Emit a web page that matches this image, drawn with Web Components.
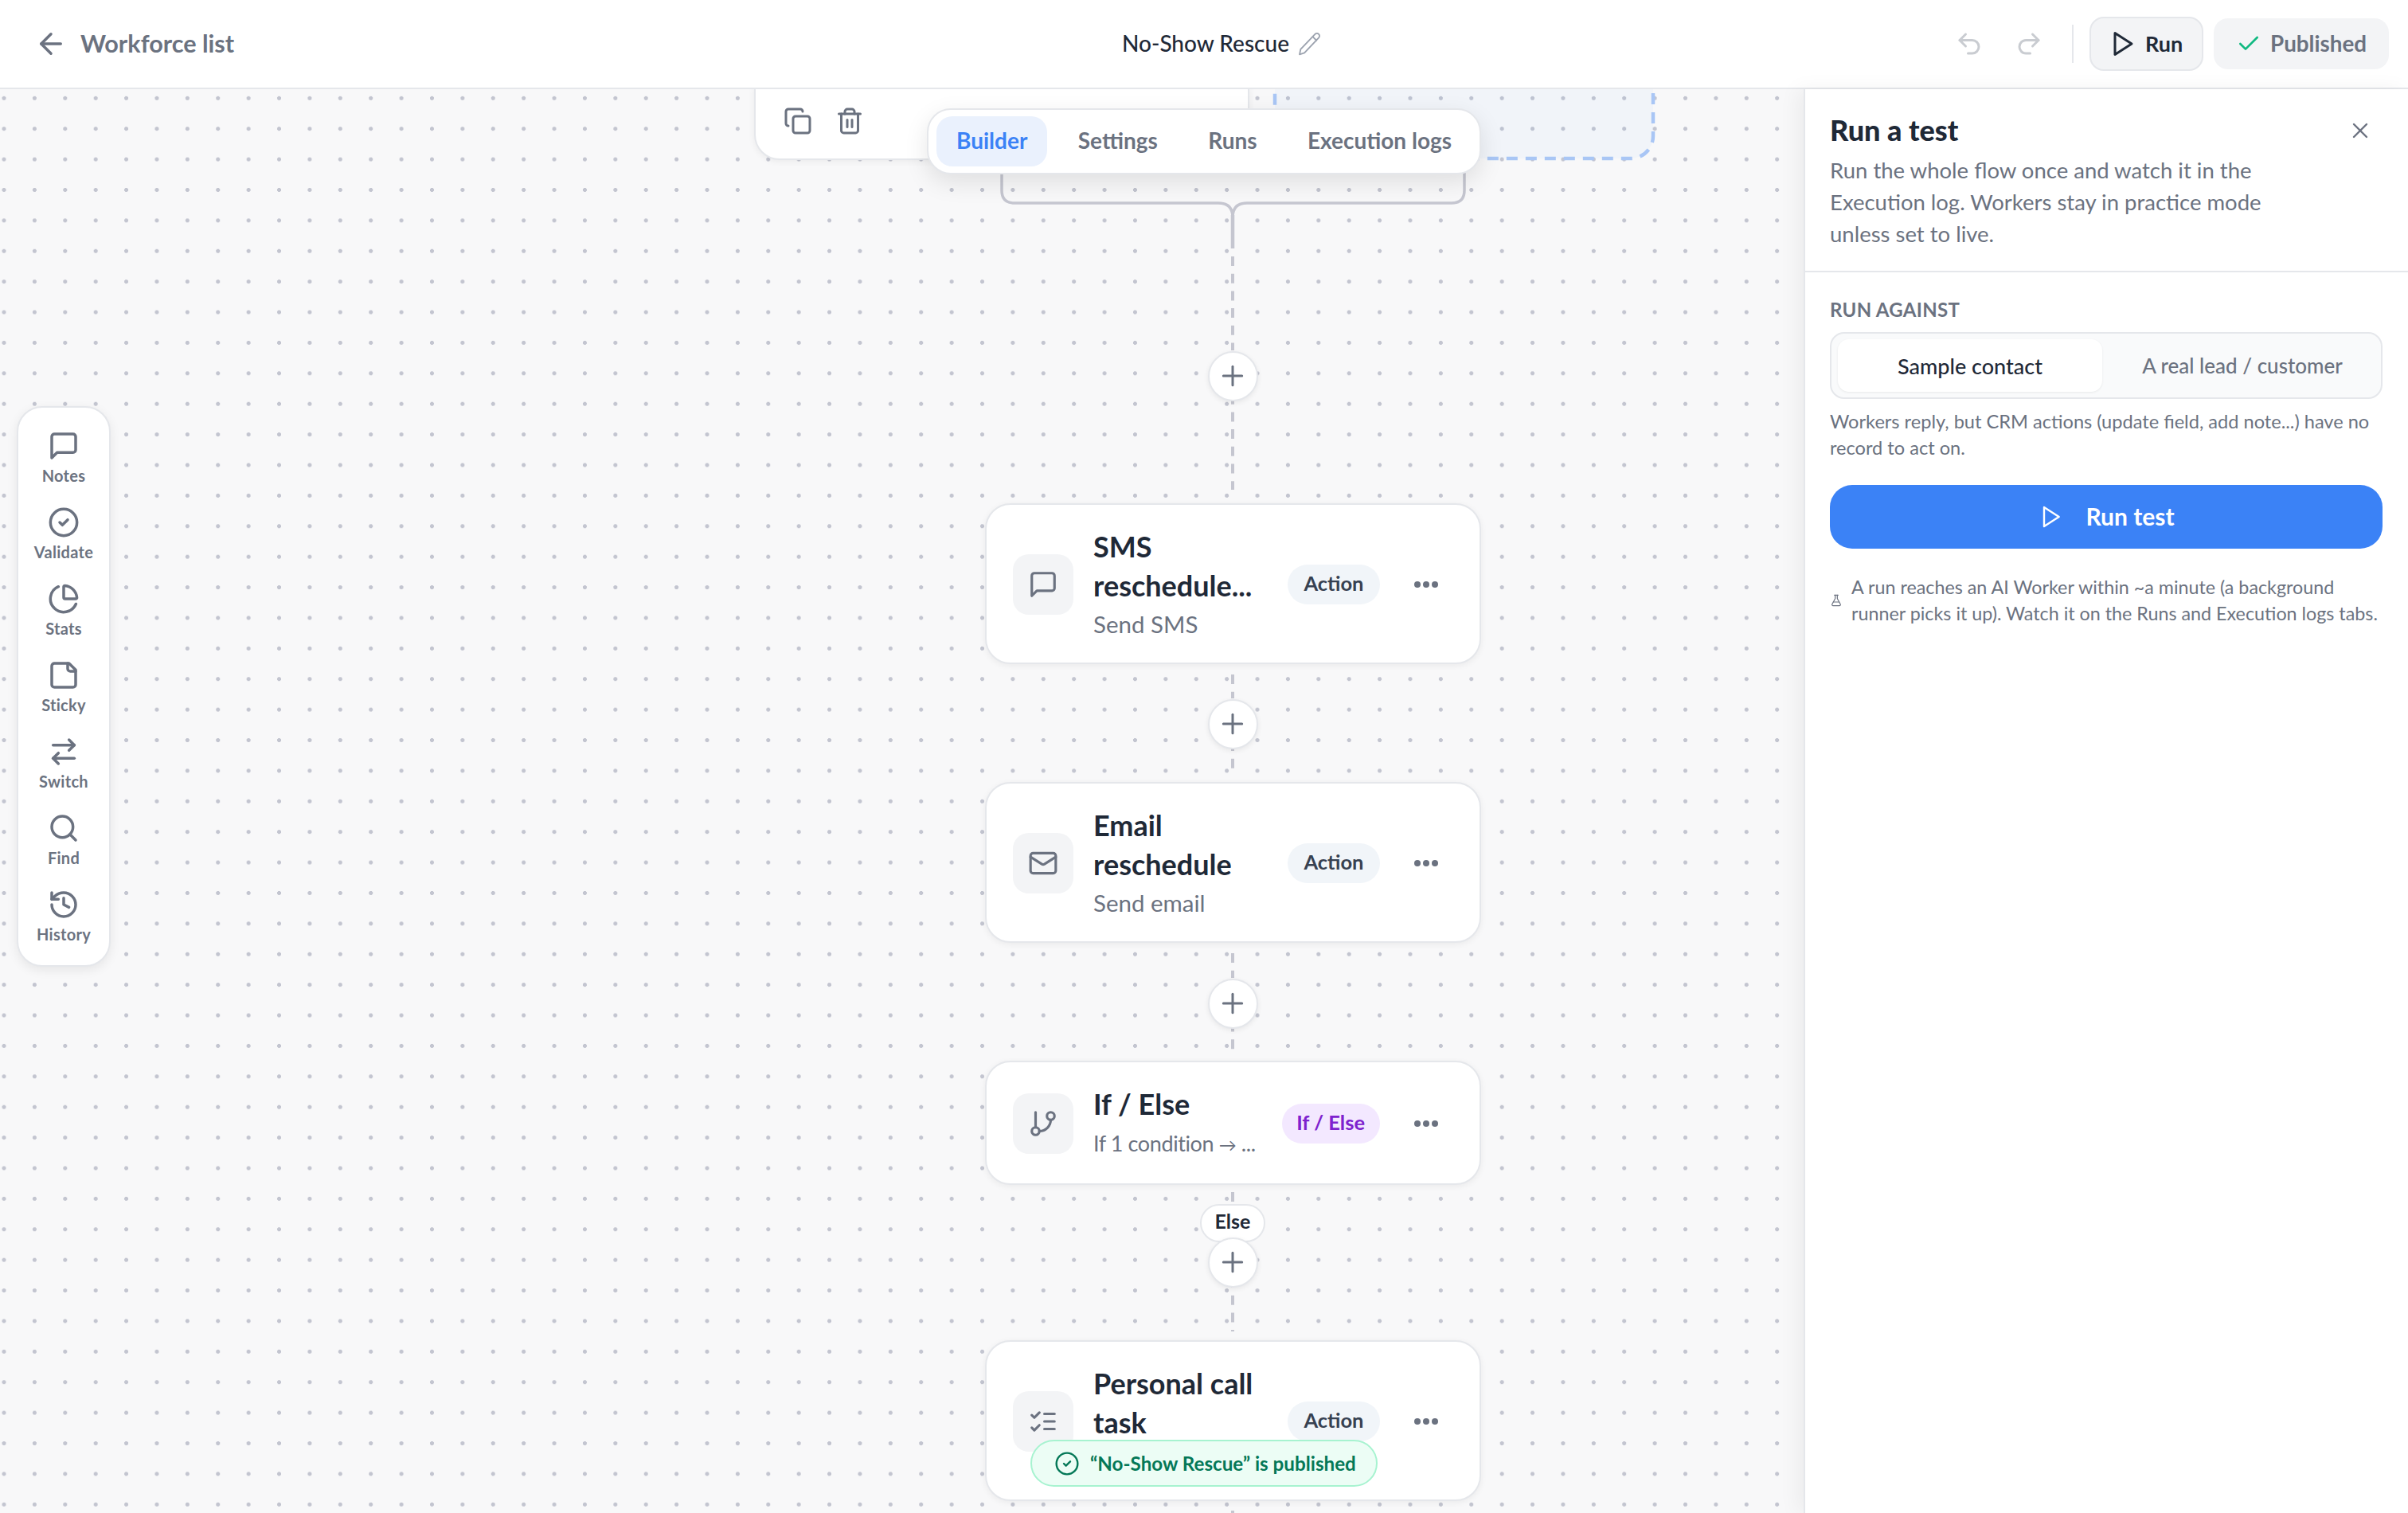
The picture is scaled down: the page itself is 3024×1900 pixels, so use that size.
<!DOCTYPE html>
<html lang="en">
<head>
<meta charset="utf-8">
<title>No-Show Rescue</title>
<style>
  html, body { margin: 0; padding: 0; background: #fff; }
  body { font-family: Lato, "Open Sans", sans-serif; color: #1f2937; }
</style>
</head>
<body>
<workflow-app></workflow-app>
<script>
const icons = {
  back: '<path d="m12 19-7-7 7-7"/><path d="M19 12H5"/>',
  pencil: '<path d="M17.6 2.9a2.4 2.4 0 0 1 3.5 3.4L7.6 20.6 3 22l1-4.8Z"/><path d="m15.4 5.4 3.5 3.4"/>',
  undo: '<path d="M9 14 4 9l5-5"/><path d="M4 9h10.5a5.5 5.5 0 0 1 0 11H11"/>',
  redo: '<path d="m15 14 5-5-5-5"/><path d="M20 9H9.5a5.5 5.5 0 0 0 0 11H13"/>',
  play: '<polygon points="6 3 20 12 6 21 6 3"/>',
  check: '<path d="M20 6 9 17l-5-5"/>',
  close: '<path d="M18 6 6 18"/><path d="m6 6 12 12"/>',
  copy: '<rect x="8" y="8" width="14" height="14" rx="2"/><path d="M4 16c-1.1 0-2-.9-2-2V4c0-1.1.9-2 2-2h10c1.1 0 2 .9 2 2"/>',
  trash: '<path d="M3 6h18"/><path d="M19 6v14c0 1-1 2-2 2H7c-1 0-2-1-2-2V6"/><path d="M8 6V4c0-1 1-2 2-2h4c1 0 2 1 2 2v2"/><path d="M10 11v6"/><path d="M14 11v6"/>',
  note: '<path d="M21 15a2 2 0 0 1-2 2H7l-4 4V5a2 2 0 0 1 2-2h14a2 2 0 0 1 2 2z"/>',
  validate: '<circle cx="12" cy="12" r="10"/><path d="m9 12 2 2 4-4"/>',
  stats: '<path d="M21 12c.552 0 1.005-.449.95-.998a10 10 0 0 0-8.953-8.951c-.55-.055-.998.398-.998.95v8a1 1 0 0 0 1 1z"/><path d="M21.21 15.89A10 10 0 1 1 8 2.83"/>',
  sticky: '<path d="M16 3H5a2 2 0 0 0-2 2v14a2 2 0 0 0 2 2h14a2 2 0 0 0 2-2V8Z"/><path d="M15 3v4a2 2 0 0 0 2 2h4"/>',
  swap: '<path d="m16 3 4 4-4 4"/><path d="M20 7H4"/><path d="m8 21-4-4 4-4"/><path d="M4 17h16"/>',
  find: '<circle cx="11" cy="11" r="8"/><path d="m21 21-4.3-4.3"/>',
  history: '<path d="M3 12a9 9 0 1 0 9-9 9.75 9.75 0 0 0-6.74 2.74L3 8"/><path d="M3 3v5h5"/><path d="M12 7v5l4 2"/>',
  mail: '<rect x="2" y="4" width="20" height="16" rx="2"/><path d="m22 7-8.97 5.7a1.94 1.94 0 0 1-2.06 0L2 7"/>',
  branch: '<path d="M6 3v12"/><circle cx="18" cy="6" r="3"/><circle cx="6" cy="18" r="3"/><path d="M18 9a9 9 0 0 1-9 9"/>',
  tasks: '<path d="m3 17 2 2 4-4"/><path d="m3 7 2 2 4-4"/><path d="M13 6h8"/><path d="M13 12h8"/><path d="M13 18h8"/>',
  plus: '<path d="M5 12h14"/><path d="M12 5v14"/>',
  flask: '<path d="M14 2v6a2 2 0 0 0 .245.96l5.51 10.08A2 2 0 0 1 18 22H6a2 2 0 0 1-1.755-2.96l5.51-10.08A2 2 0 0 0 10 8V2"/><path d="M6.453 15h11.094"/><path d="M8.5 2h7"/>'
}

function icon(name, size, color, width = 2) {
  return `<svg width="${size}" height="${size}" viewBox="0 0 24 24" fill="none" stroke="${color}" stroke-width="${width}" stroke-linecap="round" stroke-linejoin="round">${icons[name]}</svg>`
}

class TopBar extends HTMLElement {
  connectedCallback() {
    this.attachShadow({ mode: 'open' }).innerHTML = `
      <style>
        :host { display: grid; grid-template-columns: 1fr auto 1fr; align-items: center; height: 110px; background: #fff; border-bottom: 2px solid #e5e7eb; padding: 0 24px 0 43px; box-sizing: content-box; }
        .back, .title, .actions { display: flex; align-items: center; }
        .back { gap: 16px; font-size: 30.6px; font-weight: 700; color: #6b7280; }
        .title { gap: 9px; font-size: 28px; font-weight: 500; color: #1f2937; margin-left: 26px; }
        .back span, .title span, button span { padding-bottom: 2px; }
        .actions { justify-content: flex-end; }
        .ghost { display: flex; }
        .ghost + .ghost { margin-left: 39px; }
        .sep { width: 2px; height: 48px; background: #e5e7eb; margin: 0 20px 0 36px; }
        button { display: flex; align-items: center; box-sizing: border-box; border-radius: 18px; font: inherit; font-weight: 700; }
        .run { width: 143px; height: 68px; gap: 11px; padding: 0 0 0 21px; background: #f3f4f6; border: 2px solid #e5e7eb; color: #1f2937; font-size: 27px; }
        .published { width: 220px; height: 64px; gap: 11px; padding: 0 0 0 28px; margin-left: 13px; background: #f3f4f6; border: 0; color: #6b7280; font-size: 27.8px; }
      </style>
      <div class="back">${icon('back', 42, '#6b7280')}<span>Workforce list</span></div>
      <div class="title"><span>No-Show Rescue</span>${icon('pencil', 32, '#9ca3af', 1.4)}</div>
      <div class="actions">
        <span class="ghost">${icon('undo', 36, '#c9ccd1')}</span>
        <span class="ghost">${icon('redo', 36, '#c9ccd1')}</span>
        <span class="sep"></span>
        <button class="run">${icon('play', 36, '#1f2937')}<span>Run</span></button>
        <button class="published">${icon('check', 32, '#10b981')}<span>Published</span></button>
      </div>`
  }
}

class ToolItem extends HTMLElement {
  connectedCallback() {
    this.attachShadow({ mode: 'open' }).innerHTML = `
      <style>
        :host { display: flex; flex-direction: column; align-items: center; gap: 5px; height: 69px; color: #6b7280; }
        span { font-size: 20px; line-height: 24px; font-weight: 700; letter-spacing: .3px; }
        svg { display: block; }
      </style>
      ${icon(this.getAttribute('icon'), 40, '#6b7280', 2.1)}
      <span><slot></slot></span>`
  }
}

class SideTools extends HTMLElement {
  connectedCallback() {
    this.attachShadow({ mode: 'open' }).innerHTML = `
      <style>
        :host { position: absolute; left: 21px; top: 398px; width: 118px; height: 704px; box-sizing: border-box; display: flex; flex-direction: column; gap: 27px; padding-top: 28px; background: #fff; border: 2px solid #e5e7eb; border-radius: 32px; box-shadow: 0 4px 14px rgba(0,0,0,.08); }
      </style>
      <slot></slot>`
  }
}

class TabBar extends HTMLElement {
  connectedCallback() {
    this.attachShadow({ mode: 'open' }).innerHTML = `
      <style>
        :host { position: absolute; left: 1164px; top: 24px; width: 696px; display: flex; justify-content: space-between; box-sizing: border-box; height: 83px; padding: 8px 10px; background: #fff; border: 2px solid #e5e7eb; border-radius: 30px; box-shadow: 0 10px 30px rgba(0,0,0,.1); font-size: 28px; font-weight: 700; color: #6b7280; }
        span { display: flex; align-items: center; padding: 0 25px 3px; border-radius: 20px; }
        .on { background: #eaf1fd; color: #3b82f6; }
      </style>
      <span class="on">Builder</span><span>Settings</span><span>Runs</span><span>Execution logs</span>`
  }
}

class FlowNode extends HTMLElement {
  connectedCallback() {
    const purple = this.getAttribute('badge') === 'If / Else'
    this.attachShadow({ mode: 'open' }).innerHTML = `
      <style>
        :host { position: absolute; left: 1236.5px; width: 623px; box-sizing: border-box; display: flex; align-items: center; padding: 28px 37px 26px 33.5px; background: #fff; border: 2px solid #e5e7eb; border-radius: 32px; box-shadow: 0 2px 8px rgba(0,0,0,.06); }
        .ico { flex: none; width: 76px; height: 76px; display: flex; align-items: center; justify-content: center; background: #f3f4f6; border-radius: 20px; margin-right: 25px; }
        .text { flex: 1; min-width: 0; }
        .name { font-size: 36px; line-height: 49px; font-weight: 700; color: #1f2937; }
        .sub { margin-top: 2px; font-size: 29.5px; line-height: 44px; font-weight: 400; color: #6b7280; white-space: nowrap; }
        .badge { flex: none; box-sizing: border-box; height: 50px; display: flex; align-items: center; padding: 0 ${purple ? 18.5 : 20}px 4px; border-radius: 25px; font-size: 25.5px; font-weight: 700; background: ${purple ? '#f3e8ff' : '#f1f5f9'}; color: ${purple ? '#7e22ce' : '#374151'}; }
        .more { flex: none; width: 60px; margin-left: 28px; display: flex; justify-content: center; gap: 3px; }
        .more i { width: 8px; height: 8px; border-radius: 50%; background: #6b7280; }
      </style>
      <div class="ico">${icon(this.getAttribute('icon'), 38, '#6b7280')}</div>
      <div class="text">
        <div class="name"><slot name="name"></slot></div>
        <div class="sub"><slot name="sub"></slot></div>
      </div>
      <div class="badge">${this.getAttribute('badge')}</div>
      <div class="more"><i></i><i></i><i></i></div>`
  }
}

class NodeActions extends HTMLElement {
  connectedCallback() {
    this.attachShadow({ mode: 'open' }).innerHTML = `
      <style>
        :host { position: absolute; left: 946.5px; top: -4px; width: 622px; height: 93px; box-sizing: border-box; display: flex; gap: 29px; padding: 24px 0 0 35.5px; background: #fff; border: 2px solid #e5e7eb; border-radius: 0 0 32px 32px; box-shadow: 0 2px 8px rgba(0,0,0,.06); }
      </style>
      ${icon('copy', 36, '#6b7280')}${icon('trash', 36, '#6b7280')}`
  }
}

class AddButton extends HTMLElement {
  connectedCallback() {
    this.attachShadow({ mode: 'open' }).innerHTML = `
      <style>
        :host { position: absolute; left: 1516.5px; width: 63px; height: 63px; box-sizing: border-box; display: flex; align-items: center; justify-content: center; background: #fff; border: 2px solid #e5e7eb; border-radius: 50%; box-shadow: 0 2px 6px rgba(0,0,0,.07); }
      </style>
      ${icon('plus', 40, '#6b7280', 1.8)}`
  }
}

class EdgeLabel extends HTMLElement {
  connectedCallback() {
    this.attachShadow({ mode: 'open' }).innerHTML = `
      <style>
        :host { position: absolute; left: 1507px; width: 82px; height: 48px; box-sizing: border-box; display: flex; align-items: center; justify-content: center; padding-bottom: 6px; background: #fff; border: 2px solid #e5e7eb; border-radius: 24px; font-size: 25px; font-weight: 700; color: #1f2937; }
      </style>
      <slot></slot>`
  }
}

class PublishToast extends HTMLElement {
  connectedCallback() {
    this.attachShadow({ mode: 'open' }).innerHTML = `
      <style>
        :host { position: absolute; left: 1294px; top: 1696px; width: 436px; height: 59px; box-sizing: border-box; display: flex; align-items: center; gap: 13px; padding-left: 28px; background: #ecfdf5; border: 2px solid #a7f3d0; border-radius: 30px; font-size: 24.2px; font-weight: 700; color: #047857; white-space: nowrap; z-index: 5; }
      </style>
      ${icon('validate', 32, '#047857', 1.8)}<span><slot></slot></span>`
  }
}

class FlowCanvas extends HTMLElement {
  connectedCallback() {
    // dashed edge pieces, page y minus the 112px top bar
    const dashed = [[322, 440], [495.7, 615], [847, 877], [931, 965], [1197, 1228], [1283.6, 1318], [1497, 1512], [1605, 1672], [1897, 1900]]
      .map(([a, b]) => `<path d="M1548 ${a - 112}V${b - 112}" stroke-dasharray="12 9.7"/>`).join('')
    this.attachShadow({ mode: 'open' }).innerHTML = `
      <style>
        :host { display: block; position: relative; flex: 1; min-width: 0; overflow: hidden; background-color: #f8f8f9; background-image: radial-gradient(circle at center, #c3c5d0 2.3px, transparent 2.8px); background-size: 38.4px 38.4px; background-position: -14.2px -7.9px; }
        svg { position: absolute; left: 0; top: 0; }
      </style>
      <svg width="2265" height="1788" fill="none">
        <rect x="1601" y="-40" width="475" height="127" rx="28" fill="rgba(59,130,246,.035)" stroke="#a9c6f5" stroke-width="4.5" stroke-dasharray="14 10"/>
        <g stroke="#c5c6d0">
          <path d="M1258 100V127Q1258 143 1274 143H1530Q1548 143 1548 161" stroke-width="3.5"/>
          <path d="M1839 100V127Q1839 143 1823 143H1566Q1548 143 1548 161" stroke-width="3.5"/>
          <path d="M1548 158V200" stroke-width="4.5"/>
          <g stroke-width="4">${dashed}</g>
        </g>
      </svg>
      <slot></slot>`
  }
}

class RunPanel extends HTMLElement {
  connectedCallback() {
    this.attachShadow({ mode: 'open' }).innerHTML = `
      <style>
        :host { display: block; flex: none; position: relative; width: 759px; box-sizing: border-box; background: #fff; border-left: 2px solid #e5e7eb; box-shadow: -8px 0 24px rgba(0,0,0,.05); color: #6b7280; }
        .head { position: relative; height: 230px; box-sizing: border-box; padding: 31px 0 0 31px; border-bottom: 2px solid #e5e7eb; }
        h2 { margin: 0 0 11px; font-size: 36px; line-height: 40px; font-weight: 900; color: #1f2937; }
        .head p { margin: 0; font-size: 27.5px; line-height: 40px; font-weight: 400; white-space: nowrap; }
        .close { position: absolute; right: 44px; top: 36px; display: flex; }
        .body { padding: 32px 32px 0 31px; }
        .label { font-size: 24px; line-height: 30px; font-weight: 700; letter-spacing: .3px; margin-bottom: 13px; }
        .seg { display: flex; height: 84px; box-sizing: border-box; padding: 7px 8px; background: #f9fafb; border: 2px solid #e5e7eb; border-radius: 18px; font-size: 26px; font-weight: 500; }
        .seg span { flex: 1; display: flex; align-items: center; justify-content: center; border-radius: 14px; padding-left: 10px; }
        .seg .on { background: #fff; color: #1f2937; box-shadow: 0 1px 3px rgba(0,0,0,.07); flex: none; width: 332px; padding-left: 0; font-size: 27px; }
        .hint { margin: 12px 0 0; font-size: 23.6px; line-height: 33px; font-weight: 400; white-space: nowrap; }
        .go { display: flex; align-items: center; justify-content: center; gap: 28px; width: 100%; height: 80px; margin-top: 30px; border: 0; border-radius: 28px; background: #3b82f6; color: #fff; font: inherit; font-size: 30px; font-weight: 700; }
        .go span { padding-bottom: 2px; }
        .foot { display: flex; align-items: center; gap: 11px; margin-top: 32px; font-size: 23.3px; line-height: 33px; font-weight: 400; white-space: nowrap; }
      </style>
      <div class="head">
        <h2>Run a test</h2>
        <p>Run the whole flow once and watch it in the<br>Execution log. Workers stay in practice mode<br>unless set to live.</p>
        <span class="close">${icon('close', 32, '#6b7280', 1.8)}</span>
      </div>
      <div class="body">
        <div class="label">RUN AGAINST</div>
        <div class="seg"><span class="on">Sample contact</span><span>A real lead / customer</span></div>
        <p class="hint">Workers reply, but CRM actions (update field, add note...) have no<br>record to act on.</p>
        <button class="go">${icon('play', 32, '#fff', 1.8)}<span>Run test</span></button>
        <div class="foot">${icon('flask', 16, '#6b7280', 1.8)}<span>A run reaches an AI Worker within ~a minute (a background<br>runner picks it up). Watch it on the Runs and Execution logs tabs.</span></div>
      </div>`
  }
}

class WorkflowApp extends HTMLElement {
  connectedCallback() {
    this.attachShadow({ mode: 'open' }).innerHTML = `
      <style>
        :host { display: flex; flex-direction: column; width: 3024px; height: 1900px; overflow: hidden; }
        main { flex: 1; min-height: 0; display: flex; }
        .cond { font-size: 27px; letter-spacing: -.4px; }
        .cond small { font-size: 22px; }
      </style>
      <top-bar></top-bar>
      <main>
        <flow-canvas>
          <node-actions></node-actions>
          <tab-bar></tab-bar>
          <side-tools>
            <tool-item icon="note">Notes</tool-item>
            <tool-item icon="validate">Validate</tool-item>
            <tool-item icon="stats">Stats</tool-item>
            <tool-item icon="sticky">Sticky</tool-item>
            <tool-item icon="swap">Switch</tool-item>
            <tool-item icon="find">Find</tool-item>
            <tool-item icon="history">History</tool-item>
          </side-tools>
          <add-button style="top:328.5px"></add-button>
          <flow-node icon="note" badge="Action" style="top:520px"><span slot="name">SMS reschedule...</span><span slot="sub">Send SMS</span></flow-node>
          <add-button style="top:765.5px"></add-button>
          <flow-node icon="mail" badge="Action" style="top:870px"><span slot="name">Email reschedule</span><span slot="sub">Send email</span></flow-node>
          <add-button style="top:1116.5px"></add-button>
          <flow-node icon="branch" badge="If / Else" style="top:1220px"><span slot="name">If / Else</span><span slot="sub" class="cond">If 1 condition <small>→</small> ...</span></flow-node>
          <edge-label style="top:1400px">Else</edge-label>
          <add-button style="top:1441.5px"></add-button>
          <flow-node icon="tasks" badge="Action" style="top:1571px"><span slot="name">Personal call task</span><span slot="sub">&nbsp;</span></flow-node>
          <publish-toast>“No-Show Rescue” is published</publish-toast>
        </flow-canvas>
        <run-panel></run-panel>
      </main>`
  }
}

customElements.define('top-bar', TopBar)
customElements.define('tool-item', ToolItem)
customElements.define('side-tools', SideTools)
customElements.define('tab-bar', TabBar)
customElements.define('flow-node', FlowNode)
customElements.define('node-actions', NodeActions)
customElements.define('add-button', AddButton)
customElements.define('edge-label', EdgeLabel)
customElements.define('publish-toast', PublishToast)
customElements.define('flow-canvas', FlowCanvas)
customElements.define('run-panel', RunPanel)
customElements.define('workflow-app', WorkflowApp)
</script>
</body>
</html>
